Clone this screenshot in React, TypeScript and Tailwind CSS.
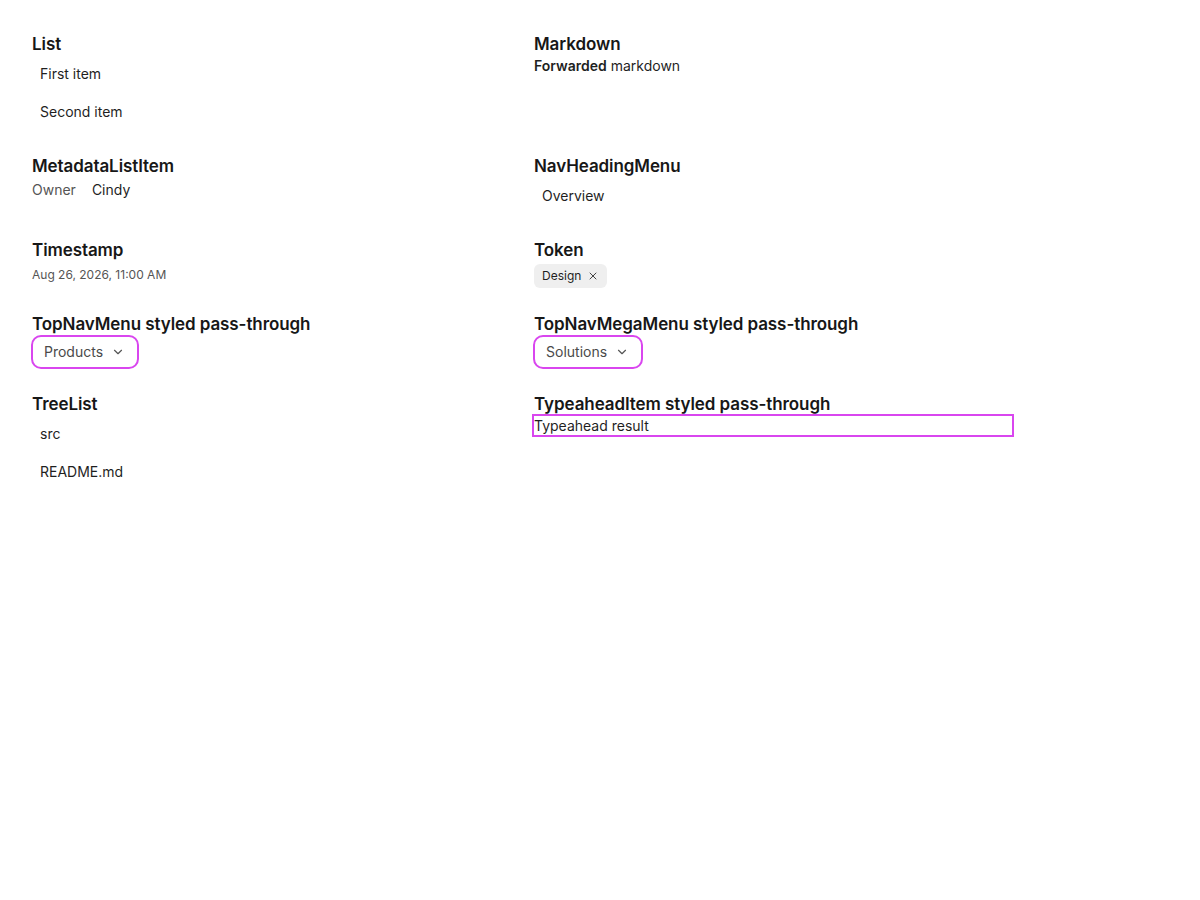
import { ChevronDown, X } from "lucide-react";
import type { ReactNode } from "react";

function Section({ title, children }: { title: string; children: ReactNode }) {
  return (
    <section className="flex flex-col gap-0.5">
      <h2 className="pt-0.5 text-[17px] font-semibold leading-5 tracking-[-0.005em] text-[#171717]">
        {title}
      </h2>
      {children}
    </section>
  );
}

function Item({ children }: { children: ReactNode }) {
  return <div className="px-2 py-2 text-sm leading-5 text-[#1f1f1f]">{children}</div>;
}

function MenuButton({ label }: { label: string }) {
  return (
    <button className="-my-px -ml-px inline-flex h-[34px] w-fit items-center gap-2 rounded-[10px] border-2 border-[#d946ef] pl-[11px] pr-3 text-sm text-[#4a4a4a]">
      {label}
      <ChevronDown className="h-3.5 w-3.5 text-[#555]" strokeWidth={2} />
    </button>
  );
}

export default function App() {
  return (
    <div
      className="min-h-screen bg-white p-8 text-[#1f1f1f]"
      style={{ fontFamily: "Inter, 'Noto Sans', sans-serif" }}
    >
      <div className="grid grid-cols-[480px_480px] gap-x-[22px] gap-y-6">
        <Section title="List">
          <div className="flex flex-col gap-0.5">
            <Item>First item</Item>
            <Item>Second item</Item>
          </div>
        </Section>
        <Section title="Markdown">
          <p className="text-sm leading-5 text-[#1f1f1f]">
            <strong className="font-semibold">Forwarded</strong> markdown
          </p>
        </Section>

        <Section title="MetadataListItem">
          <div className="flex gap-4 text-sm leading-6">
            <span className="text-[#555]">Owner</span>
            <span className="text-[#1f1f1f]">Cindy</span>
          </div>
        </Section>
        <Section title="NavHeadingMenu">
          <Item>Overview</Item>
        </Section>

        <Section title="Timestamp">
          <time className="pt-[5px] text-xs leading-4 text-[#555]">Aug 26, 2026, 11:00 AM</time>
        </Section>
        <Section title="Token">
          <span className="mt-0.5 inline-flex h-6 w-fit items-center gap-1.5 rounded-md bg-[#efefef] px-2 text-xs text-[#1f1f1f]">
            Design
            <X className="h-3 w-3 text-[#444]" strokeWidth={2} />
          </span>
        </Section>

        <Section title="TopNavMenu styled pass-through">
          <MenuButton label="Products" />
        </Section>
        <Section title="TopNavMegaMenu styled pass-through">
          <MenuButton label="Solutions" />
        </Section>

        <Section title="TreeList">
          <div className="flex flex-col gap-0.5">
            <Item>src</Item>
            <Item>README.md</Item>
          </div>
        </Section>
        <Section title="TypeaheadItem styled pass-through">
          <div className="-mt-0.5 -ml-0.5 border-2 border-[#d946ef] text-sm leading-[19px] text-[#1f1f1f]">
            Typeahead result
          </div>
        </Section>
      </div>
    </div>
  );
}
